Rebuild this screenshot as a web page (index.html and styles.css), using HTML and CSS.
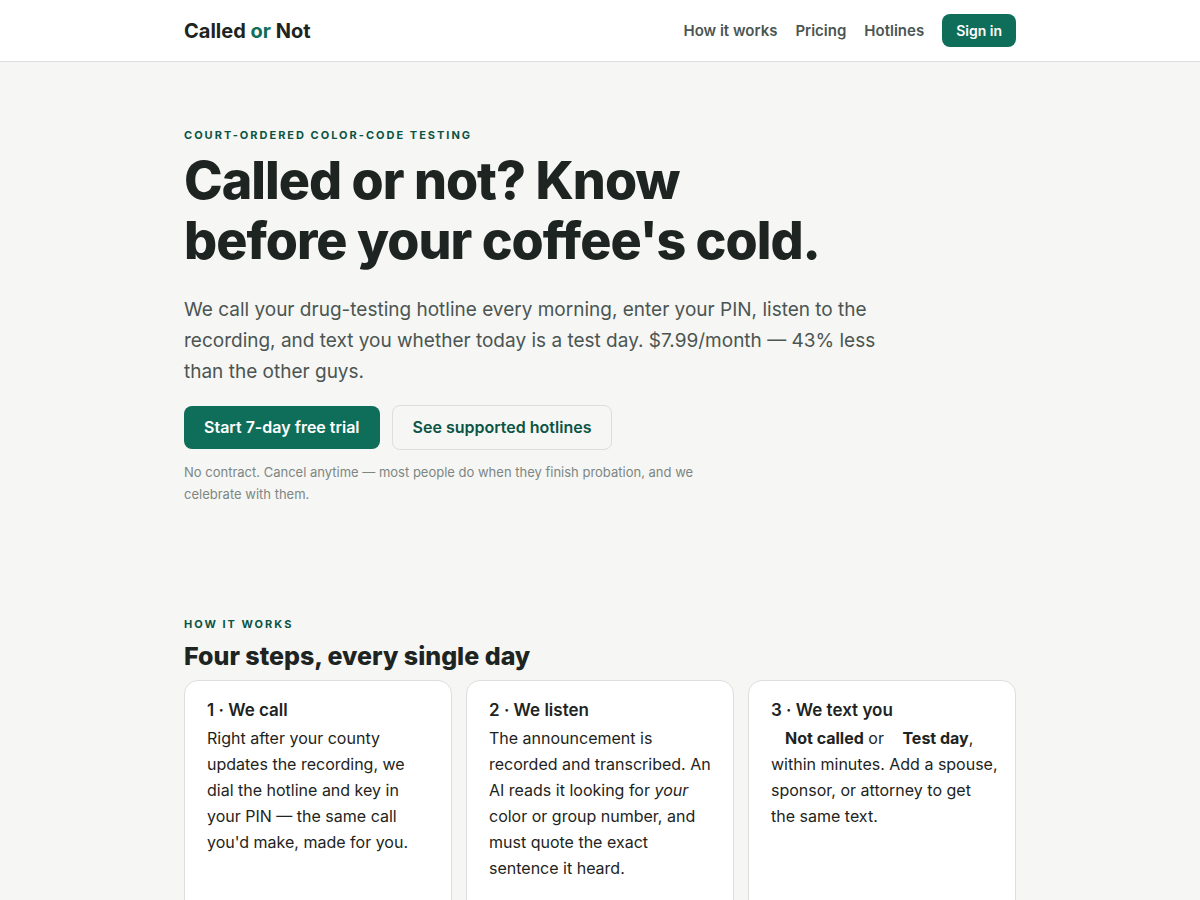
FILE: index.html
```html
<!DOCTYPE html>
<html lang="en">
<head>
<meta charset="utf-8">
<meta name="viewport" content="width=device-width, initial-scale=1">
<title>Called or Not</title>
<link rel="stylesheet" href="styles.css">
</head>
<body>
<header class="site-header">
  <div class="container header-row">
    <a class="brand" href="#">Called <span class="brand-accent">or</span> Not</a>
    <nav class="nav" aria-label="Main">
      <a class="nav-link" href="#how">How it works</a>
      <a class="nav-link" href="#pricing">Pricing</a>
      <a class="nav-link" href="#hotlines">Hotlines</a>
      <a class="sign-in" href="#signin">Sign in</a>
    </nav>
  </div>
</header>
<main class="container">
  <section class="hero">
    <p class="eyebrow">Court-ordered color-code testing</p>
    <h1 class="hero-title">Called or not? Know<br>before your coffee's cold.</h1>
    <p class="hero-text">We call your drug-testing hotline every morning, enter your PIN, listen to the<br>recording, and text you whether today is a test day. $7.99/month — 43% less<br>than the other guys.</p>
    <div class="actions">
      <a class="btn btn-primary" href="#trial">Start 7-day free trial</a>
      <a class="btn btn-secondary" href="#hotlines">See supported hotlines</a>
    </div>
    <p class="fine-print">No contract. Cancel anytime — most people do when they finish probation, and we<br>celebrate with them.</p>
  </section>
  <section class="steps" id="how">
    <p class="eyebrow">How it works</p>
    <h2 class="steps-title">Four steps, every single day</h2>
    <div class="cards">
      <article class="card">
        <h3 class="card-title">1 · We call</h3>
        <p class="card-text">Right after your county<br>updates the recording, we<br>dial the hotline and key in<br>your PIN — the same call<br>you'd make, made for you.</p>
      </article>
      <article class="card">
        <h3 class="card-title">2 · We listen</h3>
        <p class="card-text">The announcement is<br>recorded and transcribed. An<br>AI reads it looking for <em>your</em><br>color or group number, and<br>must quote the exact<br>sentence it heard.</p>
      </article>
      <article class="card">
        <h3 class="card-title">3 · We text you</h3>
        <p class="card-text"><strong class="status">Not called</strong> or <strong class="status">Test day</strong>,<br>within minutes. Add a spouse,<br>sponsor, or attorney to get<br>the same text.</p>
      </article>
    </div>
  </section>
</main>
</body>
</html>
```
FILE: styles.css
```css
* { box-sizing: border-box; }
body {
  margin: 0;
  background: #f6f6f4;
  color: #1d2421;
  font-family: Inter, "Liberation Sans", sans-serif;
  font-size: 16px;
  line-height: 26px;
}
h1, h2, h3, p { margin: 0; }
a { text-decoration: none; }
.container {
  max-width: 880px;
  margin: 0 auto;
  padding: 0 24px;
}
.site-header {
  background: #fff;
  border-bottom: 1px solid #dcdfdd;
}
.header-row {
  display: flex;
  align-items: center;
  justify-content: space-between;
  padding-top: 14px;
  padding-bottom: 14px;
}
.brand {
  color: #1d2421;
  font-size: 20px;
  font-weight: 700;
}
.brand-accent { color: #0f6e5a; }
.nav {
  display: flex;
  align-items: center;
  gap: 18px;
}
.nav-link {
  color: #4b5552;
  font-size: 15px;
  font-weight: 600;
}
.sign-in {
  background: #0f6e5a;
  border-radius: 8px;
  color: #fff;
  font-size: 14px;
  font-weight: 600;
  line-height: 17px;
  padding: 8px 14px;
}
.hero { padding: 63px 0 56px; }
.eyebrow {
  color: #0b5444;
  font-size: 11px;
  font-weight: 700;
  letter-spacing: 2px;
  line-height: 20px;
  text-transform: uppercase;
}
.hero-title {
  font-size: 52px;
  font-weight: 800;
  letter-spacing: -1px;
  line-height: 60px;
  padding: 6px 0 23px;
}
.hero-text {
  color: #4b5552;
  font-size: 19px;
  line-height: 31px;
}
.actions {
  display: flex;
  flex-wrap: wrap;
  align-items: center;
  gap: 12px;
  margin: 18px 0 11px;
}
.btn {
  border-radius: 8px;
  font-weight: 600;
  line-height: 19px;
  padding: 12px 20px;
}
.btn-primary {
  background: #0f6e5a;
  color: #fff;
}
.btn-secondary {
  border: 1px solid #dcdfdd;
  color: #0b5444;
}
.fine-print {
  color: #7d8683;
  font-size: 13px;
  line-height: 22px;
}
.steps { padding: 53px 0 56px; }
.steps-title {
  font-size: 25px;
  font-weight: 800;
  line-height: 32px;
  padding: 6px 0 8px;
}
.cards {
  display: grid;
  grid-template-columns: repeat(3, minmax(0, 1fr));
  gap: 14px;
}
.card {
  min-height: 240px;
  background: #fff;
  border: 1px solid #dcdfdd;
  border-radius: 14px;
  padding: 18px 16px 18px 22px;
}
.card-title {
  font-size: 17px;
  font-weight: 600;
  line-height: 22px;
  margin-bottom: 4px;
}
.status {
  font-weight: 700;
  margin-left: 14px;
}
```
